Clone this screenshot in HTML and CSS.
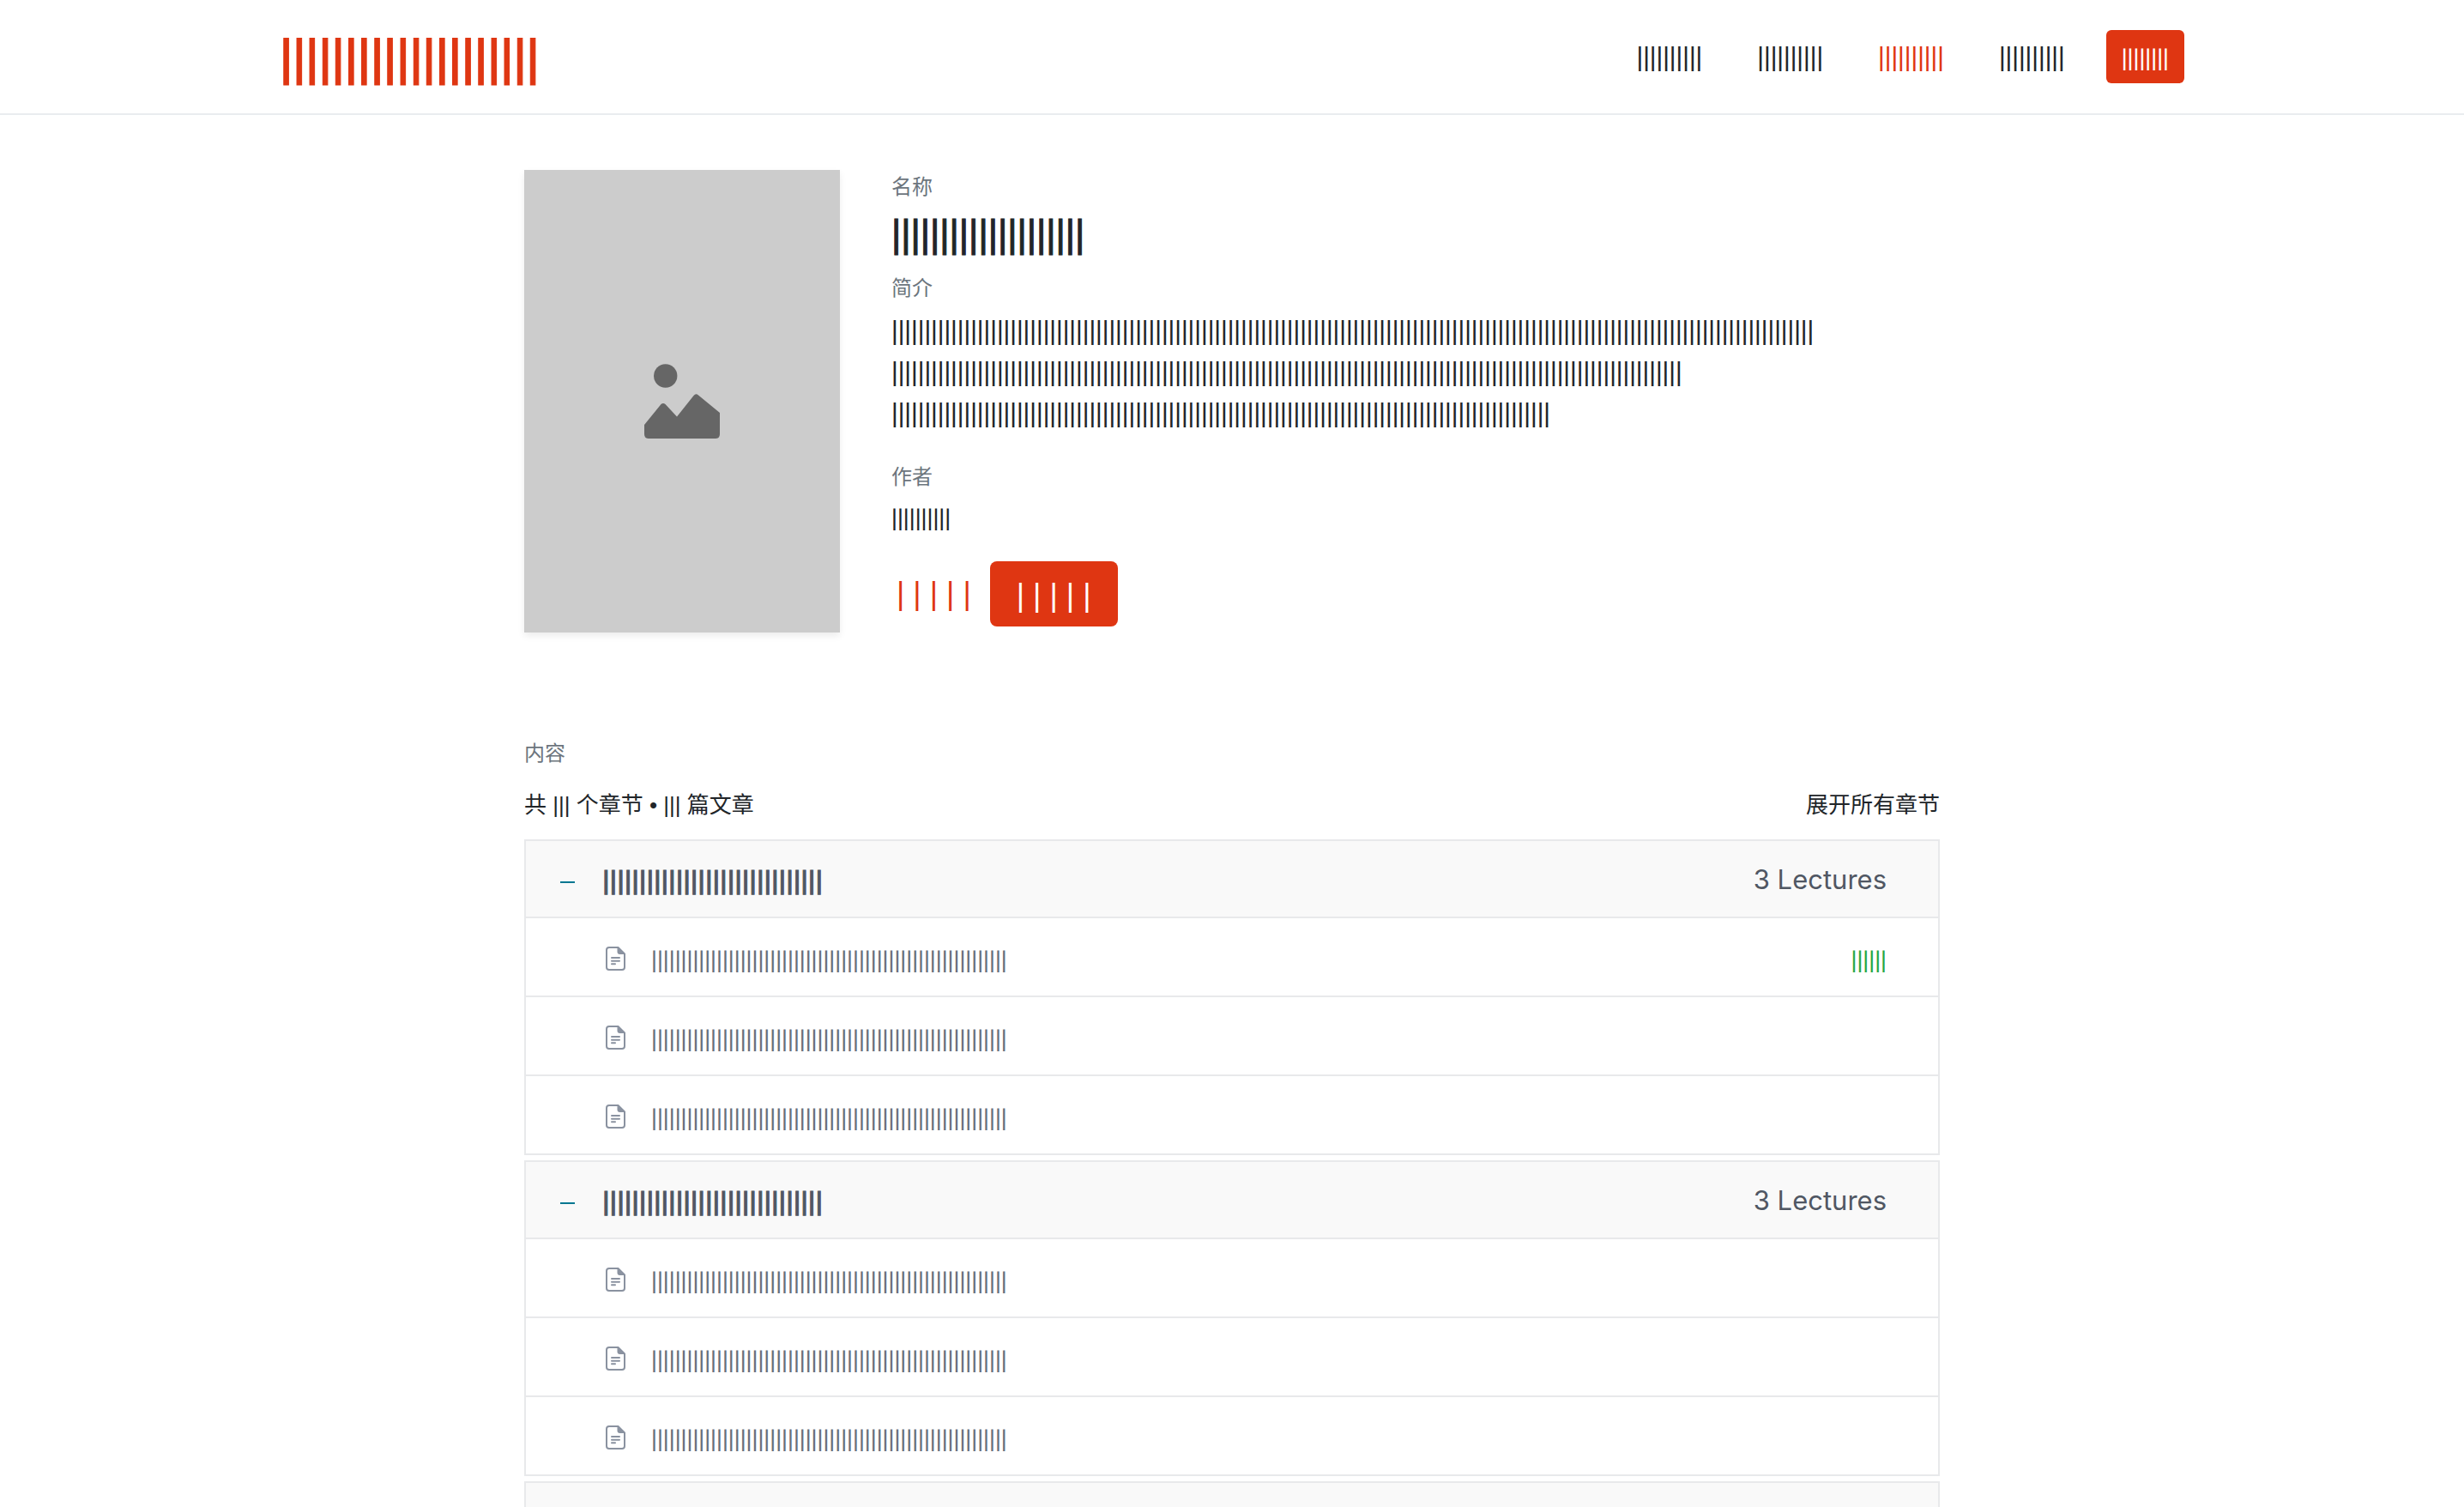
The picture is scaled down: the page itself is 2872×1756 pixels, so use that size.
FILE: index.html
```html
<!DOCTYPE html>
<html lang="zh-CN">
<head>
<meta charset="utf-8">
<meta name="viewport" content="width=device-width, initial-scale=1">
<title>内容</title>
<link rel="stylesheet" href="styles.css">
</head>
<body>
<svg class="sprite" aria-hidden="true">
  <symbol id="doc" viewBox="0 0 23 28">
    <path d="M4 1H14.500L22 8.500V24A3 3 0 0 1 19 27H4A3 3 0 0 1 1 24V4A3 3 0 0 1 4 1Z" fill="none" stroke="currentColor" stroke-width="2"/>
    <path d="M13.500 1L22 9H16.500A3 3 0 0 1 13.500 6Z" fill="currentColor"/>
    <path d="M7 13H16M7 16.800H16M7 20.200H11" fill="none" stroke="currentColor" stroke-width="2" stroke-linecap="round"/>
  </symbol>
</svg>
<header class="site-header">
  <div class="header-inner">
    <a class="brand" href="#">||||||||||||||||||||</a>
    <nav class="nav">
      <a class="nav-link" href="#">||||||||||</a>
      <a class="nav-link" href="#">||||||||||</a>
      <a class="nav-link active" href="#">||||||||||</a>
      <a class="nav-link" href="#">||||||||||</a>
      <button class="nav-button" type="button">||||||||</button>
    </nav>
  </div>
</header>
<main class="page">
  <section class="intro">
    <div class="cover">
      <svg class="cover-icon" viewBox="0 0 88 88" aria-hidden="true">
        <circle cx="24.700" cy="14" r="13.700"/>
        <path d="M0 71L19.500 47Q22 44.800 24.500 47L38 61.500L57.500 37Q60 33.800 63 36.500L88 57V82Q88 87 83 87H5Q0 87 0 82Z"/>
      </svg>
    </div>
    <div class="details">
      <div class="label">名称</div>
      <h1 class="title">||||||||||||||||||||</h1>
      <div class="label">简介</div>
      <p class="summary">||||||||||||||||||||||||||||||||||||||||||||||||||||||||||||||||||||||||||||||||||||||||||||||||||||||||||||||||||||||||||||||||||||||||||||<br>||||||||||||||||||||||||||||||||||||||||||||||||||||||||||||||||||||||||||||||||||||||||||||||||||||||||||||||||||||||||<br>||||||||||||||||||||||||||||||||||||||||||||||||||||||||||||||||||||||||||||||||||||||||||||||||||||</p>
      <div class="label">作者</div>
      <p class="author">||||||||||</p>
      <div class="actions">
        <a class="action-link" href="#">| | | | |</a>
        <button class="action-button" type="button">| | | | |</button>
      </div>
    </div>
  </section>
  <section class="contents">
    <div class="label">内容</div>
    <div class="contents-bar">
      <span>共 ||| 个章节 • ||| 篇文章</span>
      <button class="expand" type="button">展开所有章节</button>
    </div>
    <div class="chapters">
      <section class="chapter">
        <button class="chapter-head" type="button" aria-expanded="true"><i class="minus"></i><span class="chapter-title">||||||||||||||||||||||||||||||</span><span class="count">3 Lectures</span></button>
        <div class="lecture"><svg class="doc"><use href="#doc"/></svg><a href="#">||||||||||||||||||||||||||||||||||||||||||||||||||||||||||||</a><span class="status">||||||</span></div>
        <div class="lecture"><svg class="doc"><use href="#doc"/></svg><a href="#">||||||||||||||||||||||||||||||||||||||||||||||||||||||||||||</a></div>
        <div class="lecture"><svg class="doc"><use href="#doc"/></svg><a href="#">||||||||||||||||||||||||||||||||||||||||||||||||||||||||||||</a></div>
      </section>
      <section class="chapter">
        <button class="chapter-head" type="button" aria-expanded="true"><i class="minus"></i><span class="chapter-title">||||||||||||||||||||||||||||||</span><span class="count">3 Lectures</span></button>
        <div class="lecture"><svg class="doc"><use href="#doc"/></svg><a href="#">||||||||||||||||||||||||||||||||||||||||||||||||||||||||||||</a></div>
        <div class="lecture"><svg class="doc"><use href="#doc"/></svg><a href="#">||||||||||||||||||||||||||||||||||||||||||||||||||||||||||||</a></div>
        <div class="lecture"><svg class="doc"><use href="#doc"/></svg><a href="#">||||||||||||||||||||||||||||||||||||||||||||||||||||||||||||</a></div>
      </section>
      <section class="chapter">
        <button class="chapter-head" type="button" aria-expanded="false"></button>
      </section>
    </div>
  </section>
</main>
</body>
</html>
```
FILE: styles.css
```css
* { box-sizing: border-box; }
body {
  margin: 0;
  background: #fff;
  color: #212529;
  font-family: Lato, "Noto Sans CJK SC", sans-serif;
  font-size: 30px;
  font-weight: 600;
}
a { color: inherit; text-decoration: none; }
button {
  margin: 0;
  padding: 0;
  border: 0;
  background: none;
  color: inherit;
  font: inherit;
  cursor: pointer;
}
h1, p { margin: 0; }
.sprite { display: none; }

.site-header { border-bottom: 2px solid #e9ecef; }
.header-inner {
  max-width: 2220px;
  height: 132px;
  margin: 0 auto;
  display: flex;
  align-items: center;
  justify-content: space-between;
}
.brand {
  color: #df3612;
  font-size: 58px;
  font-weight: 700;
}
.brand, .title, .chapter-title { -webkit-text-stroke: 1px currentColor; }
.nav { display: flex; align-items: center; }
.nav-link { padding: 0 32px; }
.nav-link.active { color: #df3612; }
.nav-button {
  height: 62px;
  margin-left: 16px;
  padding: 0 18px;
  border-radius: 6px;
  background: #df3612;
  color: #fff;
  font-size: 27px;
}

.page { max-width: 1650px; margin: 0 auto; padding-top: 64px; }
.intro { display: flex; gap: 60px; }
.cover {
  flex: none;
  width: 368px;
  height: 539px;
  display: flex;
  align-items: center;
  justify-content: center;
  background: #ccc;
  box-shadow: 0 4px 8px rgba(0, 0, 0, .075);
}
.cover-icon { width: 88px; height: 88px; fill: #666; }
.label {
  color: #6c757d;
  font: 400 24px/36px "Noto Sans CJK SC", sans-serif;
}
.title {
  margin: 12px 0 18px;
  font-size: 44px;
  font-weight: 600;
  line-height: 52px;
}
.summary { margin: 9px 0 31px; line-height: 48px; }
.author { margin-top: 13px; font-size: 27px; line-height: 36px; }
.actions {
  display: flex;
  align-items: center;
  gap: 16px;
  margin-top: 33px;
  font: 400 36px "Liberation Sans", sans-serif;
}
.action-link { padding: 0 6px; color: #df3612; }
.action-button {
  height: 76px;
  padding: 4px 31px 0;
  border-radius: 8px;
  background: #df3612;
  color: #fff;
}

.contents { margin-top: 121px; }
.contents-bar {
  display: flex;
  justify-content: space-between;
  margin: 26px 0 22px;
  font: 400 26px/36px "Liberation Sans", "Noto Sans CJK SC", sans-serif;
}
.chapters { display: grid; gap: 6px; }
.chapter { border: 2px solid #e8e9eb; }
.chapter-head {
  display: flex;
  align-items: center;
  width: 100%;
  height: 88px;
  padding: 0 60px 0 40px;
  background: #f9f9f9;
  color: #505763;
}
.minus {
  width: 17px;
  height: 2px;
  margin: 8px 32px 0 0;
  background: #007791;
}
.chapter-title { padding-top: 4px; font: 700 34px Roboto, sans-serif; }
.count { margin-left: auto; font: 400 31px Inter, sans-serif; }
.lecture {
  display: flex;
  align-items: center;
  height: 92px;
  padding: 4px 60px 0 93px;
  border-top: 2px solid #e8e9eb;
  color: #686f7a;
  font-size: 27px;
}
.doc { width: 23px; height: 28px; margin-right: 30px; color: #8a92a0; }
.status { margin-left: auto; color: #28a745; }
```
